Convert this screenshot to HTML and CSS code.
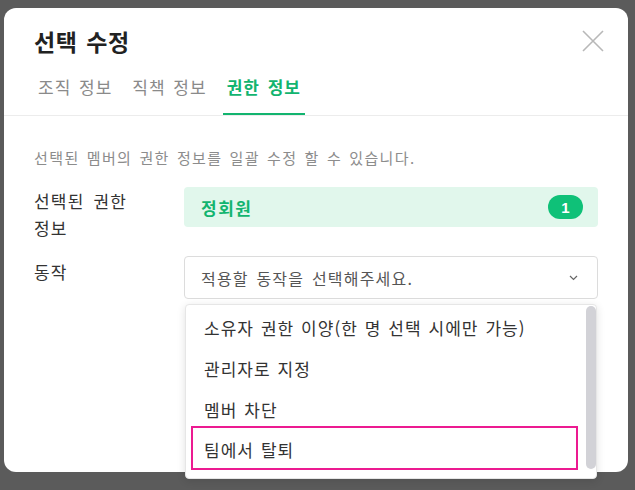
FILE: index.html
```html
<!DOCTYPE html>
<html lang="ko">
<head>
<meta charset="utf-8">
<link rel="stylesheet" href="styles.css">
</head>
<body>
<div class="backdrop">
  <div class="modal">
    <div class="head">
      <div class="title-row">
        <h1 class="title">선택 수정</h1>
        <button class="close" aria-label="닫기">
          <svg width="22" height="22" viewBox="0 0 22 22"><path d="M1 1L21 21M21 1L1 21" stroke="#b8b8b8" stroke-width="1.6" fill="none"/></svg>
        </button>
      </div>
      <div class="tabs">
        <div class="tab">조직 정보</div>
        <div class="tab">직책 정보</div>
        <div class="tab active">권한 정보</div>
      </div>
    </div>
    <div class="body">
      <p class="desc">선택된 멤버의 권한 정보를 일괄 수정 할 수 있습니다.</p>
      <div class="row">
        <div class="label">선택된 권한<br>정보</div>
        <div class="field">
          <div class="role-box">
            <span class="role-name">정회원</span>
            <span class="badge">1</span>
          </div>
        </div>
      </div>
      <div class="row row-action">
        <div class="label label-action">동작</div>
        <div class="field select-wrap">
          <div class="select">
            <span class="placeholder">적용할 동작을 선택해주세요.</span>
            <svg class="chev" width="9" height="6" viewBox="0 0 9 6"><path d="M1 1L4.5 4.5L8 1" stroke="#666" stroke-width="1.2" fill="none"/></svg>
          </div>
          <div class="dropdown">
            <ul class="options">
              <li class="option">소유자 권한 이양(한 명 선택 시에만 가능)</li>
              <li class="option">관리자로 지정</li>
              <li class="option">멤버 차단</li>
              <li class="option marked">팀에서 탈퇴</li>
            </ul>
            <div class="scrollbar"></div>
          </div>
        </div>
      </div>
    </div>
  </div>
</div>
</body>
</html>
```

FILE: styles.css
```css
* { box-sizing: border-box; }
html, body {
  margin: 0;
  padding: 0;
  width: 635px;
  height: 490px;
  overflow: hidden;
  background: #5b5b5b;
  font-family: "Noto Sans CJK KR", "Noto Sans", sans-serif;
}
.backdrop {
  padding: 8px 7px 0 4px;
}
.modal {
  width: 624px;
  height: 464px;
  background: #fff;
  border-radius: 12px;
}
.head {
  padding: 18px 24px 0 30px;
  border-bottom: 1px solid #ececec;
}
.title-row {
  display: flex;
  justify-content: space-between;
  align-items: center;
  height: 30px;
}
.title {
  margin: 0;
  font-size: 23px;
  font-weight: 700;
  color: #222;
  line-height: 30px;
  letter-spacing: 0.5px;
  word-spacing: 2px;
}
.close {
  border: 0;
  background: none;
  padding: 0;
  width: 22px;
  height: 22px;
  display: block;
}
.close svg { display: block; }
.tabs {
  display: flex;
  gap: 12px;
  margin-top: 18px;
}
.tab {
  padding: 0 4px;
  font-size: 17px;
  line-height: 26px;
  height: 41px;
  color: #8a8a8a;
  letter-spacing: 1px;
  word-spacing: 2px;
  border-bottom: 2px solid transparent;
}
.tab.active {
  color: #12b46f;
  font-weight: 700;
  border-bottom-color: #12b46f;
}
.body {
  padding: 31px 30px 0 30px;
}
.desc {
  margin: 0;
  font-size: 15px;
  line-height: 22px;
  color: #8c8c8c;
  letter-spacing: 1.4px;
  word-spacing: 1.5px;
}
.row {
  display: flex;
  align-items: flex-start;
  margin-top: 18px;
}
.row-action {
  margin-top: 15px;
}
.label {
  width: 150px;
  flex: none;
  font-size: 17px;
  line-height: 27px;
  color: #333;
  letter-spacing: 1.2px;
  word-spacing: 3px;
}
.label-action {
  padding-top: 2px;
}
.field {
  flex: 1;
}
.role-box {
  height: 40px;
  background: #e1f7ec;
  border-radius: 4px;
  display: flex;
  align-items: center;
  justify-content: space-between;
  padding: 0 15px 0 17px;
}
.role-name {
  color: #12b46f;
  font-weight: 700;
  font-size: 17px;
  letter-spacing: 1.5px;
}
.badge {
  background: #0fc178;
  color: #fff;
  font-weight: 700;
  font-size: 15px;
  font-family: "Liberation Sans", Arial, sans-serif;
  width: 35px;
  height: 24px;
  border-radius: 12px;
  display: flex;
  align-items: center;
  justify-content: center;
}
.select-wrap {
  position: relative;
}
.select {
  height: 43px;
  border: 1px solid #dcdcdc;
  border-radius: 4px;
  display: flex;
  align-items: center;
  justify-content: space-between;
  padding: 0 19px 0 16px;
}
.placeholder {
  font-size: 16px;
  color: #555;
  letter-spacing: 1.2px;
  word-spacing: 2px;
}
.chev { display: block; }
.dropdown {
  position: absolute;
  top: 48px;
  left: 1px;
  width: 412px;
  height: 175px;
  background: #fff;
  border: 1px solid #e6e6e6;
  border-radius: 4px;
  box-shadow: 0 2px 8px rgba(0, 0, 0, 0.12);
  display: flex;
}
.options {
  list-style: none;
  margin: 0;
  padding: 2px 8px 0 5px;
  flex: 1;
}
.option {
  height: 41px;
  line-height: 41px;
  padding-left: 13px;
  font-size: 17px;
  color: #333;
  white-space: nowrap;
  letter-spacing: 1px;
  word-spacing: 1.2px;
}
.option.marked {
  height: 44px;
  margin-top: -4px;
  border: 2px solid #ec1a91;
  padding-left: 11px;
  padding-top: 2px;
  line-height: 40px;
}
.scrollbar {
  width: 10px;
  flex: none;
  margin: 1px 0 9px;
  background: #d2d2d7;
  border-radius: 5px;
}
```
